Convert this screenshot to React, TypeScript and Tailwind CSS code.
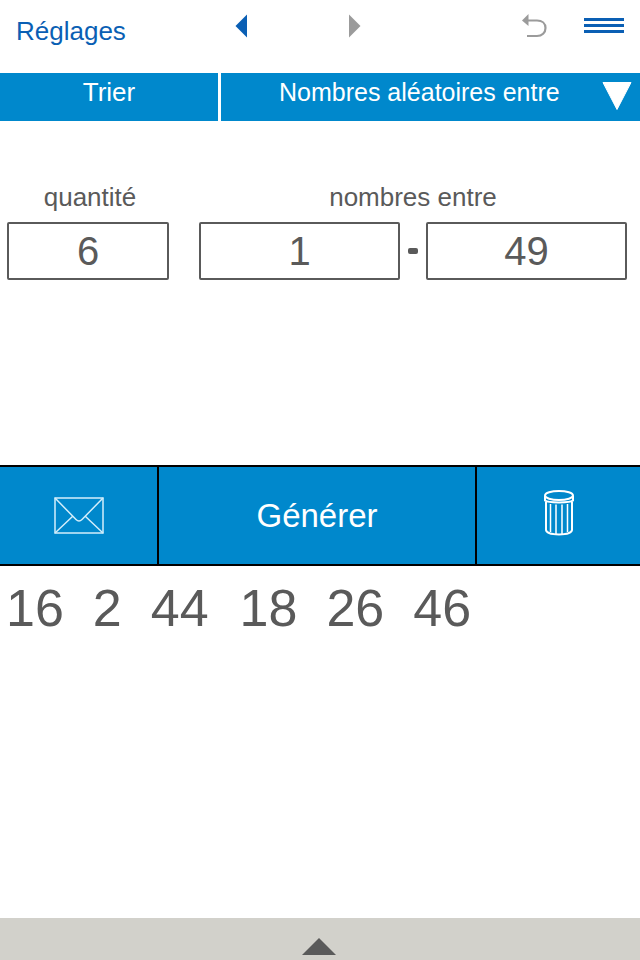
const ValueBox = ({ value, className }: { value: string; className: string }) => (
  <div
    className={`flex h-[58px] items-center justify-center rounded-[2px] border-2 border-[#5a5a5a] text-[40px] leading-none text-[#5a5a5a] ${className}`}
  >
    {value}
  </div>
);

const numbers = ['16', '2', '44', '18', '26', '46'];

const App = () => {
  return (
    <div className="flex h-[960px] w-[640px] flex-col overflow-hidden bg-white font-['Liberation_Sans',Arial,sans-serif]">
      {/* top nav */}
      <div className="flex h-[73px] items-start">
        <div className="w-[235px] pl-[16px] pt-[15px] text-[26px] leading-[32px] text-[#0a5fb4]">Réglages</div>
        <svg width="13" height="24" viewBox="0 0 13 24" className="mt-[14px] fill-[#0a5fb4]">
          <path d="M12 0.5V23.5L0.5 12Z" />
        </svg>
        <svg width="13" height="24" viewBox="0 0 13 24" className="ml-[100px] mt-[14px] fill-[#9b9b9b]">
          <path d="M1 0.5V23.5L12.5 12Z" />
        </svg>
        <svg width="26" height="26" viewBox="0 0 26 26" fill="none" className="ml-[160px] mt-[13px]">
          <path d="M6 7.500H16C21 7.500 24.500 10.500 24.500 15C24.500 19.500 21 23 16 23H6" stroke="#9b9b9b" strokeWidth="2.200" />
          <path d="M7.500 1V13L1 7.500Z" fill="#9b9b9b" />
        </svg>
        <div className="ml-[37px] mt-[18px] flex w-[40px] flex-col gap-[3px]">
          <div className="h-[3px] bg-[#0a5fb4]" />
          <div className="h-[3px] bg-[#0a5fb4]" />
          <div className="h-[3px] bg-[#0a5fb4]" />
        </div>
      </div>

      {/* blue tabs */}
      <div className="flex h-[48px] gap-[3px] leading-[38px] text-white">
        <div className="w-[218px] bg-[#0088cc] text-center text-[26px]">Trier</div>
        <div className="relative flex-1 bg-[#0088cc] pl-[58px] text-[25px]">
          Nombres aléatoires entre
          <svg width="30" height="30" viewBox="0 0 30 30" className="absolute right-[8px] top-[9px] fill-white">
            <path d="M1 0.500H29L15 27.500Z" stroke="white" strokeWidth="1" strokeLinejoin="round" />
          </svg>
        </div>
      </div>

      {/* range inputs */}
      <div className="flex h-[344px] flex-col pt-[60px]">
        <div className="flex h-[41px] text-[26px] leading-[32px] text-[#5a5a5a]">
          <div className="w-[180px] shrink-0 text-center">quantité</div>
          <div className="w-[466px] shrink-0 text-center">nombres entre</div>
        </div>
        <div className="flex items-center pl-[7px]">
          <ValueBox value="6" className="w-[162px]" />
          <ValueBox value="1" className="ml-[30px] w-[201px]" />
          <div className="mx-[8px] h-[6px] w-[10px] rounded-[2px] bg-[#5a5a5a]" />
          <ValueBox value="49" className="w-[201px]" />
        </div>
      </div>

      {/* action bar */}
      <div className="flex h-[101px] border-y-2 border-black bg-[#0088cc]">
        <div className="flex w-[157px] items-center justify-center">
          <svg width="50" height="38" viewBox="0 0 50 38" fill="none" stroke="#d3eefb" strokeWidth="1.500">
            <rect x="1" y="1" width="48" height="35" />
            <path d="M1 1L22 22.500Q25 25.500 28 22.500L49 1M1 36L19 19M49 36L31 19" />
          </svg>
        </div>
        <div className="flex w-[320px] items-center justify-center border-x-2 border-black text-[33px] text-white">
          Générer
        </div>
        <div className="flex flex-1 items-center justify-center">
          <svg width="32" height="48" viewBox="0 0 32 48" fill="none" stroke="white" className="mb-[5px]">
            <g strokeWidth="2">
              <ellipse cx="16" cy="6.500" rx="14" ry="4.500" />
              <path d="M2 7V11.500C5 14 27 14 30 11.500V7" />
              <path d="M3 13V41C3.500 47 28.500 47 29 41V13" />
            </g>
            <path d="M7.500 15V43M13 15.500V45M19 15.500V45M24.500 15V43" strokeWidth="1.500" />
          </svg>
        </div>
      </div>

      {/* results */}
      <div className="flex flex-1 gap-[29px] pl-[6px] pt-[14px] text-[52px] leading-[56px] text-[#5a5a5a]">
        {numbers.map((n, i) => (
          <span key={i} className={i === 3 ? 'ml-[2px]' : ''}>
            {n}
          </span>
        ))}
      </div>

      {/* bottom drawer */}
      <div className="flex h-[42px] items-end justify-center bg-[#d2d1cb] pb-[5px] pr-[2px]">
        <svg width="34" height="17" viewBox="0 0 34 17" className="fill-[#5a5a5a]">
          <path d="M17 0L34 17H0Z" />
        </svg>
      </div>
    </div>
  );
};

export default App;
